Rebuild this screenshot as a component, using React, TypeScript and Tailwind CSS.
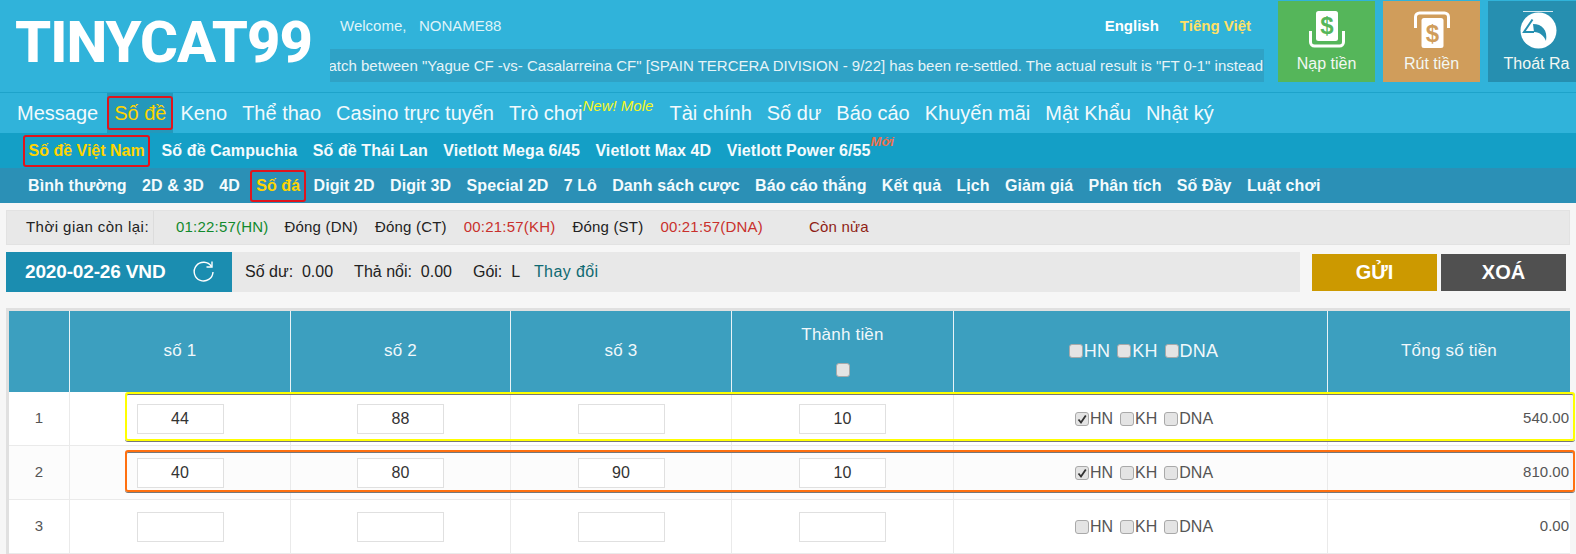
import { Fragment, type ReactNode } from 'react';

const topNav = ['Keno', 'Thể thao', 'Casino trực tuyến'];
const topNavRest = ['Tài chính', 'Số dư', 'Báo cáo', 'Khuyến mãi', 'Mật Khẩu', 'Nhật ký'];
const gameNav = ['Số đề Campuchia', 'Số đề Thái Lan', 'Vietlott Mega 6/45', 'Vietlott Max 4D'];
const betNavA = ['Bình thường', '2D & 3D', '4D'];
const betNavB = ['Digit 2D', 'Digit 3D', 'Special 2D', '7 Lô', 'Danh sách cược', 'Báo cáo thắng', 'Kết quả', 'Lịch', 'Giảm giá', 'Phân tích', 'Số Đầy', 'Luật chơi'];

const rows = [
  { n: 1, a: '44', b: '88', c: '', d: '10', hn: true, total: '540.00', bg: 'bg-white' },
  { n: 2, a: '40', b: '80', c: '90', d: '10', hn: true, total: '810.00', bg: 'bg-[#fcfcfc]' },
  { n: 3, a: '', b: '', c: '', d: '', hn: false, total: '0.00', bg: 'bg-white' },
];

function Check({ checked = false }: { checked?: boolean }) {
  return (
    <span className="inline-flex h-[14px] w-[14px] items-center justify-center rounded-[3px] border border-[#a9a9a9] bg-[#e4e4e4]">
      {checked && (
        <svg viewBox="0 0 12 12" className="h-3 w-3">
          <path d="M2.5 6.5 5 9.5 9.8 2.5" fill="none" stroke="#333" strokeWidth="1.8" />
        </svg>
      )}
    </span>
  );
}

function Field({ value }: { value: string }) {
  return (
    <input
      readOnly
      value={value}
      className="h-[30px] w-[87px] border border-[#e0e0e0] bg-white text-center text-base text-[#333] outline-none"
    />
  );
}

function HeadCell({ children, last }: { children?: ReactNode; last?: boolean }) {
  return (
    <div className={`flex h-[81px] items-center justify-center pb-[2px] text-[17px] tracking-[0.2px] text-[#f1f8fb] ${last ? '' : 'border-r border-[#e8f3f7]'}`}>
      {children}
    </div>
  );
}

function Market({ name, checked }: { name: string; checked?: boolean }) {
  return (
    <span className="flex items-center">
      <Check checked={checked} />
      <span className="ml-px">{name}</span>
    </span>
  );
}

function DepositIcon() {
  return (
    <svg viewBox="0 0 40 40" className="h-[40px] w-[40px]">
      <rect x="9" y="2" width="22" height="30" rx="2.5" fill="#fff" />
      <text x="20" y="25" textAnchor="middle" fontSize="24" fontWeight="700" fill="#55b65a" fontFamily="Liberation Sans">$</text>
      <path d="M3.5 22v11a4 4 0 0 0 4 4h25a4 4 0 0 0 4-4V22" fill="none" stroke="#fff" strokeWidth="3" />
    </svg>
  );
}

function WithdrawIcon() {
  return (
    <svg viewBox="0 0 40 40" className="h-[40px] w-[40px]">
      <path d="M3.5 19V8a4 4 0 0 1 4-4h25a4 4 0 0 1 4 4v11" fill="none" stroke="#fff" strokeWidth="3" />
      <rect x="9.5" y="9" width="22" height="30" rx="2.5" fill="#fff" />
      <text x="20.5" y="33" textAnchor="middle" fontSize="24" fontWeight="700" fill="#d09d5b" fontFamily="Liberation Sans">$</text>
    </svg>
  );
}

function LogoutIcon() {
  return (
    <svg viewBox="0 0 40 40" className="h-[40px] w-[40px]">
      <rect x="6" y="2" width="30" height="1" fill="#d7e9f0" />
      <circle cx="21.5" cy="21.5" r="18" fill="#fff" />
      <path d="M15.5 10.5 7 23h10" fill="none" stroke="#268fb0" strokeWidth="2" />
      <path d="M16 15c9 0 15 6 13 17-2-5-6-9-12-9z" fill="#268fb0" />
    </svg>
  );
}

function ActionTile({ label, bg, icon }: { label: string; bg: string; icon: ReactNode }) {
  return (
    <div className={`flex h-[81px] w-[97px] shrink-0 flex-col items-center justify-end pb-[8px] text-base text-[#f3f8f3] ${bg}`}>
      {icon}
      <span className="mt-[5px] leading-5">{label}</span>
    </div>
  );
}

export default function App() {
  return (
    <div className="h-[554px] w-[1576px] overflow-hidden bg-[#f6f6f6] font-['Liberation_Sans',Arial,sans-serif]">
      <header className="flex h-[93px] overflow-hidden border-b border-[#1ea3ca] bg-[#30b3da]">
        <div className="mt-[6px] w-[330px] shrink-0 pl-[15px] font-['Roboto',sans-serif] text-[58px] leading-[72px] font-extrabold tracking-[-1px] text-white">
          TINYCAT99
        </div>
        <div className="w-[934px] shrink-0">
          <div className="flex h-[49px] items-start justify-between pt-[15px] pr-[13px] pl-[10px] text-[15px]">
            <span className="text-[#dff3f9]">Welcome,&nbsp;&nbsp; NONAME88</span>
            <span className="flex gap-[21px] font-bold">
              <span className="text-white">English</span>
              <span className="text-[#ffe066]">Tiếng Việt</span>
            </span>
          </div>
          <div className="flex h-[33px] w-[934px] justify-end overflow-hidden bg-[#2fa2c6] pr-px text-[15px] leading-[33px] whitespace-nowrap text-[#e6f4f8]">
            <span className="shrink-0">
              The match between "Yague CF -vs- Casalarreina CF" [SPAIN TERCERA DIVISION - 9/22] has been re-settled. The actual result is "FT 0-1" instead
            </span>
          </div>
        </div>
        <div className="ml-[14px] flex shrink-0 items-start gap-2 pt-px">
          <ActionTile label="Nạp tiền" bg="bg-[#55b65a]" icon={<DepositIcon />} />
          <ActionTile label="Rút tiền" bg="bg-[#d09d5b]" icon={<WithdrawIcon />} />
          <ActionTile label="Thoát Ra" bg="bg-[#268fb0]" icon={<LogoutIcon />} />
        </div>
      </header>

      <nav className="flex h-[40px] items-center gap-[15px] bg-[#30b3da] pl-[17px] text-xl text-[#f2fafd]">
        <span>Message</span>
        <span className="-mr-[8px] -ml-[6px] flex items-center self-stretch bg-[#2498bb]">
          <span className="rounded-[3px] border-2 border-[#e0141c] px-[5px] leading-[30px] text-[#ffd400]">Số đề</span>
        </span>
        {topNav.map((t) => (
          <span key={t}>{t}</span>
        ))}
        <span className="relative">
          Trò chơi
          <span className="absolute top-[-4px] left-full text-[15px] whitespace-nowrap text-[#f7f71e] italic">New! Mole</span>
        </span>
        <span className="ml-[72px] flex gap-[15px]">
          {topNavRest.map((t) => (
            <span key={t}>{t}</span>
          ))}
        </span>
      </nav>

      <nav className="flex h-[35px] items-center gap-[15.4px] bg-[#149fc6] pl-[23px] text-base font-bold tracking-[0.1px] text-[#f4fbfd]">
        <span className="-mr-[4px] rounded-[3px] border-2 border-[#e0141c] px-[3.5px] leading-[28px] tracking-normal text-[#ffd400]">Số đề Việt Nam</span>
        {gameNav.map((t) => (
          <span key={t}>{t}</span>
        ))}
        <span className="relative">
          Vietlott Power 6/55
          <span className="absolute top-[-7px] left-full text-[13px] text-[#f0704a] italic">Mới</span>
        </span>
      </nav>

      <nav className="flex h-[35px] items-center gap-[15.25px] bg-[#2b90b6] pl-[28px] text-base font-bold tracking-[0.1px] text-[#f4fbfd]">
        {betNavA.map((t) => (
          <span key={t}>{t}</span>
        ))}
        <span className="-mr-[8px] -ml-[5px] rounded-[3px] border-2 border-[#e0141c] px-[4px] leading-[28px] text-[#ffd400]">Số đá</span>
        {betNavB.map((t) => (
          <span key={t}>{t}</span>
        ))}
      </nav>

      <div className="mx-[6px] mt-[7px] flex h-[35px] items-center border border-[#e2e2e2] bg-[#e8e8e8] text-[15px] tracking-[0.2px] text-[#222]">
        <span className="flex h-full w-[147px] items-center border-r border-[#dcdcdc] pl-[19px] tracking-[0.45px]">Thời gian còn lại:</span>
        <span className="ml-[22px] text-[#118a2d]">01:22:57(HN)</span>
        <span className="ml-[16px]">Đóng (DN)</span>
        <span className="ml-[17px]">Đóng (CT)</span>
        <span className="ml-[17px] text-[#c9302c]">00:21:57(KH)</span>
        <span className="ml-[17px]">Đóng (ST)</span>
        <span className="ml-[17px] text-[#c9302c]">00:21:57(DNA)</span>
        <span className="ml-[46px] text-[#8f1d14]">Còn nửa</span>
      </div>

      <div className="mx-[6px] mt-[7px] flex h-[40px] items-center">
        <div className="flex h-full w-[226px] items-center justify-between bg-[#1b8db0] pr-4 pl-[19px] text-[19px] font-bold tracking-[-0.15px] text-white">
          2020-02-26 VND
          <svg viewBox="0 0 24 24" className="h-[24px] w-[24px]" fill="none" stroke="#fff" strokeWidth="1.4">
            <path d="M19.5 6.5A9.4 9.4 0 1 0 21 12" />
            <path d="M20 1.5v5.5h-5.5" />
          </svg>
        </div>
        <div className="flex h-full w-[1068px] items-center gap-[21px] bg-[#e8e8e8] pl-[13px] text-base text-[#222]">
          <span>Số dư:&nbsp; 0.00</span>
          <span>Thả nổi:&nbsp; 0.00</span>
          <span>Gói:&nbsp; L <span className="ml-[10px] tracking-[0.4px] text-[#0f6a72]">Thay đổi</span></span>
        </div>
        <div className="ml-[12px] flex h-[37px] w-[125px] items-center justify-center bg-[#cc9900] text-xl font-bold text-white">GỬI</div>
        <div className="ml-[4px] flex h-[37px] w-[125px] items-center justify-center bg-[#505050] text-xl font-bold text-white">XOÁ</div>
      </div>

      <div className="relative mx-[6px] mt-[16px] border-t-[3px] border-l-[3px] border-[#e0e0e0]">
        <div className="grid grid-cols-[61px_221px_220px_221px_222px_374px_1fr] bg-[#3c9fbf]">
          <HeadCell />
          <HeadCell>số 1</HeadCell>
          <HeadCell>số 2</HeadCell>
          <HeadCell>số 3</HeadCell>
          <HeadCell>
            <div className="mb-[2px] flex flex-col items-center gap-[16px]">
              Thành tiền
              <Check />
            </div>
          </HeadCell>
          <HeadCell>
            <span className="flex items-center gap-[7px] pl-[6px] text-lg">
              <Market name="HN" />
              <Market name="KH" />
              <Market name="DNA" />
            </span>
          </HeadCell>
          <HeadCell last>Tổng số tiền</HeadCell>
        </div>

        <div className="grid grid-cols-[61px_221px_220px_221px_222px_374px_1fr] text-[15px] text-[#555]">
          {rows.map((r) => (
            <Fragment key={r.n}>
              <div className={`flex h-[54px] items-center justify-center border-r border-b border-[#eaeaea] ${r.bg}`}>{r.n}</div>
              {[r.a, r.b, r.c, r.d].map((v, i) => (
                <div key={i} className={`flex h-[54px] items-center justify-center border-r border-b border-[#eaeaea] ${r.bg}`}>
                  <Field value={v} />
                </div>
              ))}
              <div className={`flex h-[54px] items-center justify-center gap-[7px] border-r border-b border-[#eaeaea] pl-[7px] text-base ${r.bg}`}>
                <Market name="HN" checked={r.hn} />
                <Market name="KH" />
                <Market name="DNA" />
              </div>
              <div className={`flex h-[54px] items-center justify-end border-b border-[#eaeaea] pr-px ${r.bg}`}>{r.total}</div>
            </Fragment>
          ))}
        </div>

        <div className="pointer-events-none absolute top-[81px] left-[116px] h-[49px] w-[1450px] rounded-[3px] border-2 border-[#ffff00] shadow-[0_1px_0_#777,inset_0_1px_0_#777]" />
        <div className="pointer-events-none absolute top-[139px] left-[116px] h-[42px] w-[1450px] rounded-[3px] border-2 border-[#ff7010] shadow-[0_1px_0_#777,inset_0_1px_0_#777]" />
      </div>
    </div>
  );
}
